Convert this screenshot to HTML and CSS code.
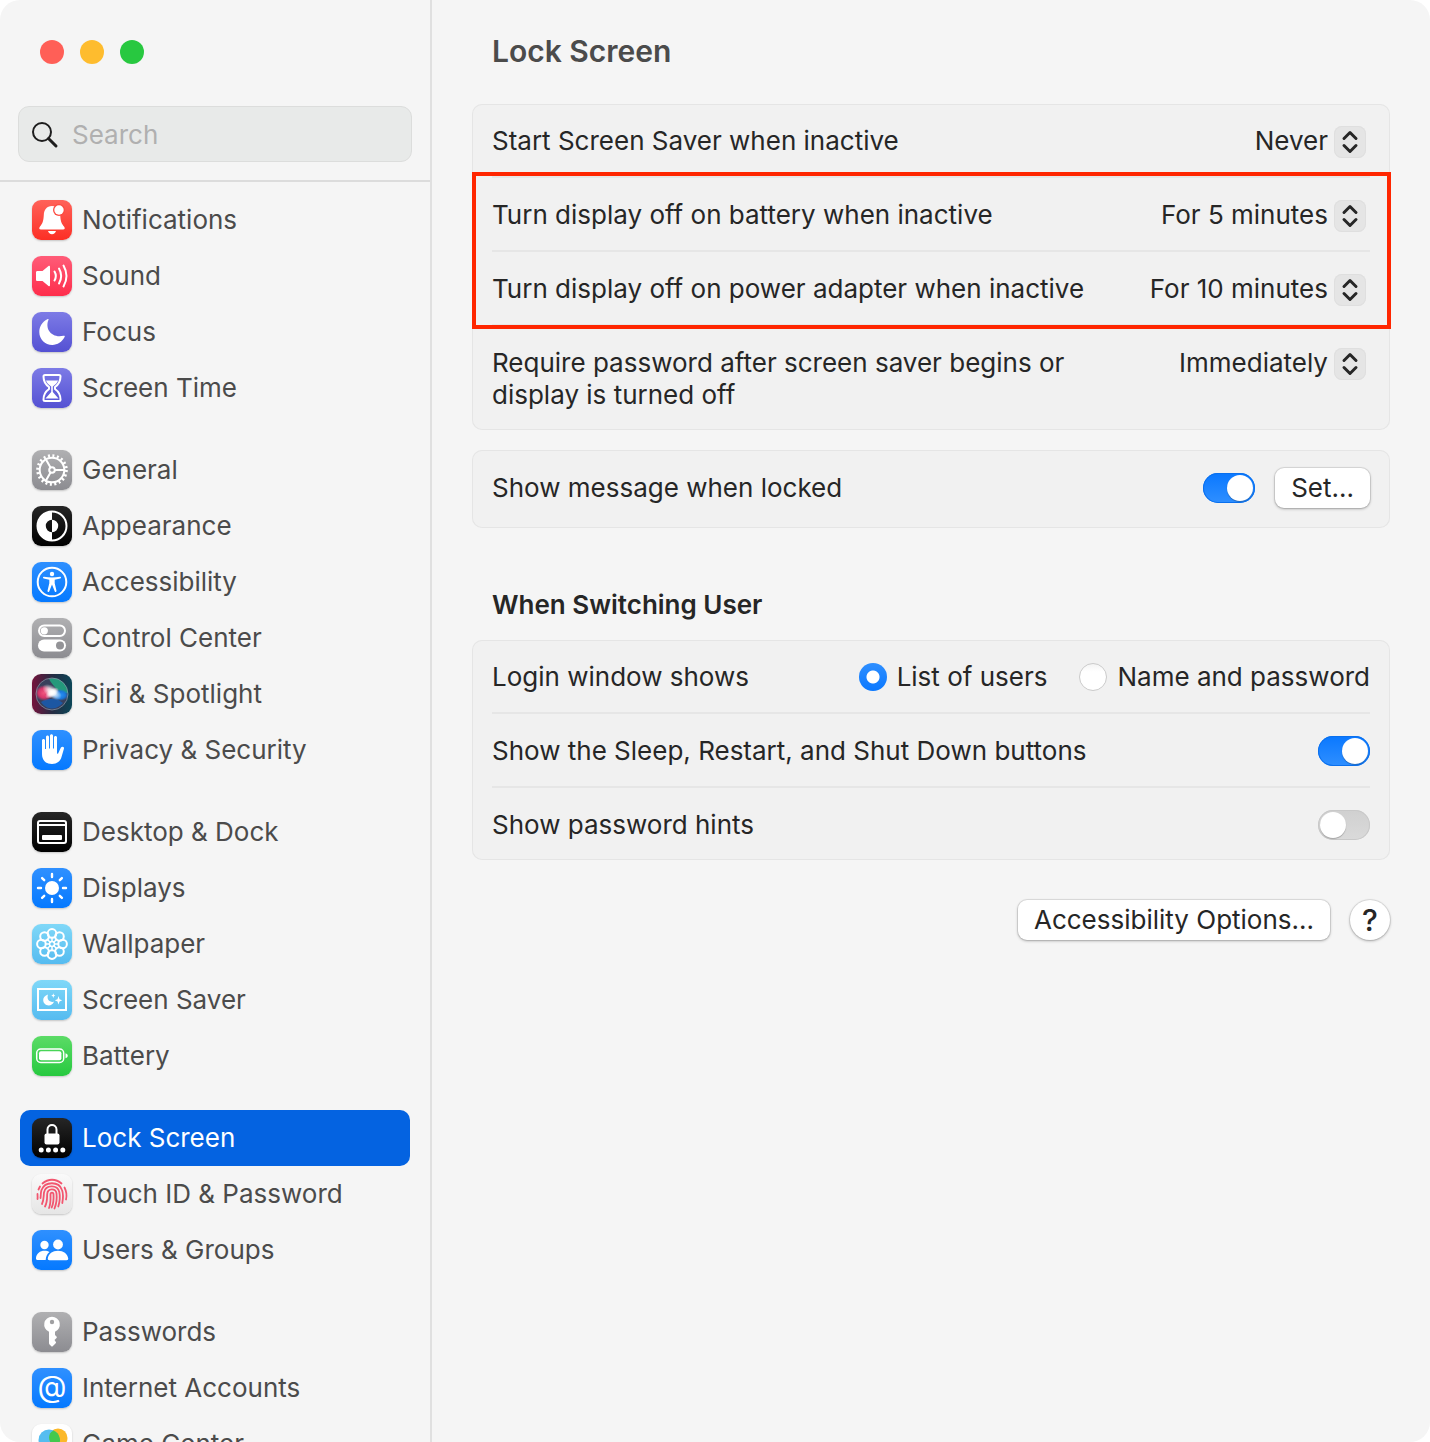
FILE: index.html
```html
<!DOCTYPE html>
<html lang="en">
<head>
    <meta charset="UTF-8">
    <meta name="viewport" content="width=device-width, initial-scale=1.0">
    <title>Lock Screen</title>
    <link rel="stylesheet" href="styles.css">
</head>
<body>
    <div class="window">
        <aside class="sidebar">
            <div class="traffic">
                <button type="button" class="light close" aria-label="Close"></button>
                <button type="button" class="light minimize" aria-label="Minimize"></button>
                <button type="button" class="light zoom" aria-label="Zoom"></button>
            </div>
            <label class="search">
                <svg class="search-icon" viewBox="0 0 28 28" aria-hidden="true">
                    <circle cx="11" cy="11" r="9"/>
                    <path d="M17.500 17.500 25 25" class="handle"/>
                </svg>
                <input type="search" placeholder="Search" aria-label="Search">
            </label>
            <nav class="menu">
                <ul>
                    <li><a href="#">
                        <svg class="icon red" viewBox="0 0 40 40" aria-hidden="true">
                            <path class="fill" d="M20 6c-5.500 0-8 4-8.200 9-.3 6-1.300 8.500-3.800 11.500-1.300 1.600-1 3 1 3h22c2 0 2.300-1.400 1-3-2.500-3-3.500-5.500-3.800-11.500C28 10 25.500 6 20 6zM16 31h8c-.5 2-2 3.200-4 3.200S16.500 33 16 31z"/>
                            <circle cx="27" cy="10" r="6" fill="#fc4b41" stroke="none"/>
                            <circle class="fill" cx="27" cy="10" r="4.700"/>
                        </svg>
                        Notifications</a></li>
                    <li><a href="#">
                        <svg class="icon pink" viewBox="0 0 40 40" aria-hidden="true">
                            <path class="fill" d="M5.500 15h5l6-5c.8-.7 1.500-.3 1.500.7v18.600c0 1-.7 1.400-1.500.7l-6-5h-5c-1 0-1.500-.5-1.500-1.500v-7c0-1 .5-1.500 1.500-1.500z"/>
                            <path class="line" d="M22.500 15.500c1.600 2.700 1.600 6.300 0 9M27 12.500c2.600 4.500 2.600 10.500 0 15M31.500 9.500c3.700 6.500 3.700 14.500 0 21"/>
                        </svg>
                        Sound</a></li>
                    <li><a href="#">
                        <svg class="icon purple" viewBox="0 0 40 40" aria-hidden="true">
                            <path class="fill" d="M16.500 7.800c-4 9.500 3.500 18.700 15 16 1.200-.3 1.600.3 1.100 1.300C30 30 25.500 33 20.300 33 13 33 7.300 27.200 7.300 20c0-5.500 3-10.200 8-12.700 1-.5 1.600-.4 1.200.5z"/>
                        </svg>
                        Focus</a></li>
                    <li><a href="#">
                        <svg class="icon purple" viewBox="0 0 40 40" aria-hidden="true">
                            <path class="line" d="M13 7h14c1 0 1.500.5 1.500 1.500 0 5.500-2 8-5.500 10.500v2c3.500 2.500 5.500 5 5.500 10.500 0 1-.5 1.500-1.500 1.500H13c-1 0-1.500-.5-1.500-1.500 0-5.500 2-8 5.500-10.500v-2c-3.500-2.500-5.500-5-5.500-10.500 0-1 .5-1.500 1.500-1.500z"/>
                            <path class="fill" d="M14 12.500h12c-.8 2.500-2.500 4-5.200 6V24l5.700 6.500h-13l5.700-6.500v-5.500c-2.700-2-4.400-3.500-5.200-6z"/>
                        </svg>
                        Screen Time</a></li>
                </ul>
                <ul>
                    <li><a href="#">
                        <svg class="icon gray" viewBox="0 0 40 40" aria-hidden="true">
                            <circle class="line teeth" cx="20" cy="20" r="14.300"/>
                            <circle class="line" cx="20" cy="20" r="12.300"/>
                            <circle class="line" cx="20" cy="20" r="2.800"/>
                            <path class="line" d="M23 20h9.500M18.500 17.400 13.700 9.100M18.500 22.600l-4.800 8.300"/>
                        </svg>
                        General</a></li>
                    <li><a href="#">
                        <svg class="icon black" viewBox="0 0 40 40" aria-hidden="true">
                            <circle class="line" cx="20" cy="20" r="14.500"/>
                            <path class="fill" d="M20 5.500a14.500 14.500 0 0 0 0 29v-8.300a6.200 6.200 0 0 1 0-12.400zM20 13.800a6.200 6.200 0 0 1 0 12.400z"/>
                        </svg>
                        Appearance</a></li>
                    <li><a href="#">
                        <svg class="icon blue" viewBox="0 0 40 40" aria-hidden="true">
                            <circle class="line" cx="20" cy="20" r="14.300"/>
                            <circle class="fill" cx="20" cy="12" r="2.200"/>
                            <path class="fill" d="M12 14.800c-1.200-.2-1.400 1.300-.3 1.600l5.600 1.400v3.500l-1.800 7.500c-.3 1.100 1.200 1.600 1.700.6l2.800-7 2.800 7c.5 1 2 .5 1.700-.6l-1.800-7.500v-3.500l5.600-1.400c1.100-.3.900-1.800-.3-1.600-5.500 1-10.500 1-16 0z"/>
                        </svg>
                        Accessibility</a></li>
                    <li><a href="#">
                        <svg class="icon gray" viewBox="0 0 40 40" aria-hidden="true">
                            <rect class="line" x="7" y="7.500" width="26" height="10.500" rx="5.200"/>
                            <circle class="fill" cx="12.300" cy="12.800" r="3.600"/>
                            <rect class="fill" x="6" y="21.500" width="28" height="12" rx="6"/>
                            <circle cx="28" cy="27.500" r="4" fill="#939397"/>
                        </svg>
                        Control Center</a></li>
                    <li><a href="#">
                        <svg class="icon siri" viewBox="0 0 40 40" aria-hidden="true">
                            <defs>
                                <radialGradient id="glow">
                                    <stop offset="0" stop-color="#fff"/>
                                    <stop offset=".4" stop-color="#fff" stop-opacity=".8"/>
                                    <stop offset="1" stop-color="#fff" stop-opacity="0"/>
                                </radialGradient>
                                <radialGradient id="rose">
                                    <stop offset="0" stop-color="#f2557f"/>
                                    <stop offset=".6" stop-color="#d5366a"/>
                                    <stop offset="1" stop-color="#d5366a" stop-opacity="0"/>
                                </radialGradient>
                                <radialGradient id="azure">
                                    <stop offset="0" stop-color="#2b95f7"/>
                                    <stop offset=".6" stop-color="#1b78dc"/>
                                    <stop offset="1" stop-color="#1b78dc" stop-opacity="0"/>
                                </radialGradient>
                            </defs>
                            <circle cx="20" cy="20" r="16" fill="#39405c"/>
                            <path d="M17 5c9-3 18 4 19 14-6 2-14-5-19-14z" fill="#24997b"/>
                            <path d="M9 28c8-5 16-4 22 1-6 7-16 8-22-1z" fill="#1c57a3"/>
                            <ellipse cx="12" cy="19" rx="9" ry="8" fill="url(#rose)"/>
                            <ellipse cx="28" cy="21" rx="9" ry="6" fill="url(#azure)"/>
                            <ellipse cx="20" cy="18" rx="11" ry="6" fill="url(#glow)" transform="rotate(35 20 18)"/>
                            <ellipse cx="20" cy="19" rx="8" ry="4" fill="url(#glow)" transform="rotate(-35 20 19)"/>
                            <circle cx="20" cy="20" r="16" fill="none" stroke="#9aa9b8" stroke-width="1" opacity=".6"/>
                        </svg>
                        Siri &amp; Spotlight</a></li>
                    <li><a href="#">
                        <svg class="icon blue" viewBox="0 0 40 40" aria-hidden="true">
                            <path class="fill" d="M10 21V10.500c0-2 3-2 3 0V19h1V7c0-2 3-2 3 0v11.500h1V5.800c0-2 3-2 3 0v12.700h1V7.500c0-2 3-2 3 0v16l1 .3 2.800-6c.9-1.900 3.700-1.200 3.200.7l-2.500 8.500C28.500 31 25 34 20 34c-6.500 0-10-4-10-10z"/>
                        </svg>
                        Privacy &amp; Security</a></li>
                </ul>
                <ul>
                    <li><a href="#">
                        <svg class="icon black" viewBox="0 0 40 40" aria-hidden="true">
                            <rect class="line" x="6" y="9" width="28" height="22" rx="2"/>
                            <path class="line" d="M7 13h26"/>
                            <rect class="fill" x="10" y="23" width="20" height="5" rx="1"/>
                        </svg>
                        Desktop &amp; Dock</a></li>
                    <li><a href="#">
                        <svg class="icon blue" viewBox="0 0 40 40" aria-hidden="true">
                            <circle class="fill" cx="20" cy="20" r="7"/>
                            <path class="line rays" d="M20 6v3M20 31v3M6 20h3M31 20h3M10.100 10.100l2.100 2.100M27.800 27.800l2.100 2.100M10.100 29.900l2.100-2.100M27.800 12.200l2.100-2.100"/>
                        </svg>
                        Displays</a></li>
                    <li><a href="#">
                        <svg class="icon cyan" viewBox="0 0 40 40" aria-hidden="true">
                            <g class="line">
                                <circle cx="20" cy="9.400" r="4.300"/>
                                <circle cx="27.500" cy="12.500" r="4.300"/>
                                <circle cx="30.600" cy="20" r="4.300"/>
                                <circle cx="27.500" cy="27.500" r="4.300"/>
                                <circle cx="20" cy="30.600" r="4.300"/>
                                <circle cx="12.500" cy="27.500" r="4.300"/>
                                <circle cx="9.400" cy="20" r="4.300"/>
                                <circle cx="12.500" cy="12.500" r="4.300"/>
                            </g>
                            <g class="line thin">
                                <circle cx="20" cy="20" r="2.500"/>
                                <path d="M20 17.500v-4M20 22.500v4M17.500 20h-4M22.500 20h4M18.200 18.200l-3-3M21.800 18.200l3-3M18.200 21.800l-3 3M21.800 21.800l3 3"/>
                            </g>
                        </svg>
                        Wallpaper</a></li>
                    <li><a href="#">
                        <svg class="icon cyan" viewBox="0 0 40 40" aria-hidden="true">
                            <rect class="line square" x="6" y="9" width="28" height="21"/>
                            <path class="fill" d="M16 14.500c-1.500 4.500 1 8 6 7.300-1.300 2.500-3 3.700-5.300 3.700-3.200 0-5.500-2.300-5.500-5.400 0-2.600 1.700-4.700 4.800-5.600zM26.500 16l1 3.200 2.700 1.100-2.700 1.100-1 3.200-1-3.200-2.700-1.100 2.700-1.100zM21.300 13.300l.6 1.700 1.500.6-1.500.6-.6 1.700-.6-1.700-1.500-.6 1.500-.6z"/>
                        </svg>
                        Screen Saver</a></li>
                    <li><a href="#">
                        <svg class="icon green" viewBox="0 0 40 40" aria-hidden="true">
                            <rect class="line thin" x="4.700" y="13" width="27" height="13.500" rx="4"/>
                            <rect class="fill" x="7" y="15.300" width="22.400" height="9" rx="2"/>
                            <path class="fill" d="M33.500 17.300c3 .8 3 4.200 0 5z"/>
                        </svg>
                        Battery</a></li>
                </ul>
                <ul>
                    <li><a href="#" class="selected" aria-current="page">
                        <svg class="icon black" viewBox="0 0 40 40" aria-hidden="true">
                            <path class="line" d="M15.500 17v-5.500c0-6 9-6 9 0V17"/>
                            <rect class="fill" x="12.500" y="15.500" width="15" height="11" rx="2"/>
                            <path class="line dots" d="M9.200 32h0M16.400 32h0M23.600 32h0M30.800 32h0"/>
                        </svg>
                        Lock Screen</a></li>
                    <li><a href="#">
                        <svg class="icon white" viewBox="0 0 40 40" aria-hidden="true">
                            <g class="print">
                                <path d="M10.500 9.500C16 4.500 24 4.500 29.500 9.500M6.500 15.500l1.500-3M32.500 13.500c2 4 2.500 8 1.500 12M5.500 20c0 2 .3 3.500 0 5"/>
                                <path d="M8.500 24c.5-3 0-5 1-8 3.500-9 17.500-9 20.500 0 1.500 4 1.200 8 .3 13"/>
                                <path d="M10 30c2-4 1.500-7.500 2-11.500 1.500-8 13.500-8 15.300-.5 1 4.500.5 9.500-1 14.500"/>
                                <path d="M13 32.500c2.500-4.500 2-9 2.200-12.500.5-6 8.500-6 9.300-.5.600 5 0 10-2 15"/>
                                <path d="M17 34c2-4.500 1.500-9.500 1.500-13.500 0-2.500 3-2.500 3 0 .3 4.500 0 9-1.800 13"/>
                            </g>
                        </svg>
                        Touch ID &amp; Password</a></li>
                    <li><a href="#">
                        <svg class="icon blue" viewBox="0 0 40 40" aria-hidden="true">
                            <circle class="fill" cx="12.500" cy="15" r="4.200"/>
                            <path class="fill" d="M17.500 22c-2.500 2-3.600 4.500-3.800 8H5.500c-1.200 0-1.600-.7-1.500-2 .5-4.500 4-7.200 8.500-7.200 2 0 3.700.4 5 1.200z"/>
                            <circle class="fill" cx="26" cy="14.500" r="4.900"/>
                            <path class="fill" d="M26 20.800c-5.500 0-9.500 3-10.200 7.500-.2 1.200.4 1.900 1.700 1.900h17c1.300 0 1.900-.7 1.700-1.900-.7-4.500-4.700-7.500-10.200-7.500z"/>
                        </svg>
                        Users &amp; Groups</a></li>
                </ul>
                <ul>
                    <li><a href="#">
                        <svg class="icon gray" viewBox="0 0 40 40" aria-hidden="true">
                            <path class="fill" d="M20 4.800a7.800 7.800 0 0 0-3 15V31c0 .8.200 1.200.8 1.800l1.500 1.500c.4.400 1 .4 1.400 0l3-3c.5-.5.500-1 0-1.500L22.500 28l2-2c.5-.5.500-1 0-1.500L23 23v-3.200a7.800 7.800 0 0 0-3-15z"/>
                            <circle cx="20" cy="10" r="2.200" fill="#a0a0a2"/>
                        </svg>
                        Passwords</a></li>
                    <li><a href="#">
                        <svg class="icon blue" viewBox="0 0 40 40" aria-hidden="true">
                            <text class="at" x="20" y="29" text-anchor="middle">@</text>
                        </svg>
                        Internet Accounts</a></li>
                    <li><a href="#">
                        <svg class="icon plain" viewBox="0 0 40 40" aria-hidden="true">
                            <circle cx="26" cy="14" r="9.500" fill="#fbb829"/>
                            <circle cx="17" cy="16" r="10.500" fill="#55bdf0"/>
                            <path d="M21.500 6.500a10.500 10.500 0 0 1 4 16.500A9.500 9.500 0 0 1 18 9.500a9 9 0 0 1 3.500-3z" fill="#43c94e"/>
                            <circle cx="26" cy="27" r="8" fill="#f4508a"/>
                        </svg>
                        Game Center</a></li>
                </ul>
            </nav>
        </aside>

        <main class="content">
            <h1>Lock Screen</h1>

            <section class="card">
                <div class="row">
                    <label for="saver">Start Screen Saver when inactive</label>
                    <span class="popup">
                        <select id="saver"><option>Never</option></select>
                        <svg class="arrows" viewBox="0 0 32 32" aria-hidden="true"><path d="M10 12.500l6-6 6 6M10 19.500l6 6 6-6"/></svg>
                    </span>
                </div>
                <div class="highlight">
                    <div class="row">
                        <label for="battery">Turn display off on battery when inactive</label>
                        <span class="popup">
                            <select id="battery"><option>For 5 minutes</option></select>
                            <svg class="arrows" viewBox="0 0 32 32" aria-hidden="true"><path d="M10 12.500l6-6 6 6M10 19.500l6 6 6-6"/></svg>
                        </span>
                    </div>
                    <div class="row">
                        <label for="adapter">Turn display off on power adapter when inactive</label>
                        <span class="popup">
                            <select id="adapter"><option>For 10 minutes</option></select>
                            <svg class="arrows" viewBox="0 0 32 32" aria-hidden="true"><path d="M10 12.500l6-6 6 6M10 19.500l6 6 6-6"/></svg>
                        </span>
                    </div>
                </div>
                <div class="row">
                    <label for="require" class="wrap">Require password after screen saver begins or display is turned off</label>
                    <span class="popup">
                        <select id="require"><option>Immediately</option></select>
                        <svg class="arrows" viewBox="0 0 32 32" aria-hidden="true"><path d="M10 12.500l6-6 6 6M10 19.500l6 6 6-6"/></svg>
                    </span>
                </div>
            </section>

            <section class="card">
                <div class="row message">
                    <label for="message">Show message when locked</label>
                    <span class="controls">
                        <input type="checkbox" class="switch" id="message" checked>
                        <button type="button" class="button">Set...</button>
                    </span>
                </div>
            </section>

            <h2>When Switching User</h2>
            <section class="card">
                <div class="row">
                    <span id="login">Login window shows</span>
                    <span class="radios" role="radiogroup" aria-labelledby="login">
                        <label><input type="radio" name="login" checked>List of users</label>
                        <label><input type="radio" name="login">Name and password</label>
                    </span>
                </div>
                <div class="row">
                    <label for="buttons">Show the Sleep, Restart, and Shut Down buttons</label>
                    <input type="checkbox" class="switch" id="buttons" checked>
                </div>
                <div class="row">
                    <label for="hints">Show password hints</label>
                    <input type="checkbox" class="switch" id="hints">
                </div>
            </section>

            <div class="actions">
                <button type="button" class="button">Accessibility Options...</button>
                <button type="button" class="button help" aria-label="Help">?</button>
            </div>
        </main>
    </div>
</body>
</html>
```
FILE: styles.css
```css
* {
    box-sizing: border-box;
}
body {
    margin: 0;
    background-color: #fff;
    color: #262626;
    font-family: Inter, "Liberation Sans", sans-serif;
    font-size: 26px;
    line-height: 32px;
}
button, input, select {
    font: inherit;
    color: inherit;
    margin: 0;
}
.window {
    display: flex;
    height: 100vh;
    overflow: hidden;
    background-color: #f5f5f5;
    border-radius: 20px;
}

/* sidebar */
.sidebar {
    display: flex;
    flex-direction: column;
    flex: none;
    width: 432px;
    border-right: 2px solid #e0e0e0;
    color: #4b4b4b;
}
.traffic {
    display: flex;
    gap: 16px;
    padding: 40px 40px 42px;
}
.light {
    width: 24px;
    height: 24px;
    padding: 0;
    border: none;
    border-radius: 50%;
}
.close {
    background-color: #ff5f57;
}
.minimize {
    background-color: #febc2e;
}
.zoom {
    background-color: #28c840;
}
.search {
    display: flex;
    flex: none;
    align-items: center;
    gap: 13px;
    height: 56px;
    margin: 0 18px 18px;
    padding: 1px 12px 0;
    background-color: #e8eae9;
    border: 1px solid #dcdddc;
    border-radius: 11px;
}
.search-icon {
    flex: none;
    width: 28px;
    height: 28px;
    fill: none;
    stroke: #1e1e1e;
    stroke-width: 2;
    stroke-linecap: round;
}
.handle {
    stroke-width: 3;
}
.search input {
    width: 100%;
    padding: 0;
    border: none;
    outline: none;
    background: none;
    appearance: none;
}
.search input::placeholder {
    color: #b0b0b0;
}
.menu {
    display: flex;
    flex-direction: column;
    flex: 1;
    gap: 26px;
    min-height: 0;
    padding: 10px 20px;
    overflow: hidden;
    border-top: 2px solid #dcdcdc;
}
.menu ul {
    flex: none;
    margin: 0;
    padding: 0;
    list-style: none;
}
.menu a {
    display: flex;
    align-items: center;
    gap: 10px;
    height: 56px;
    padding: 0 12px;
    border-radius: 10px;
    color: inherit;
    text-decoration: none;
    white-space: nowrap;
}
.menu .selected {
    background-color: #0463e1;
    color: #fff;
}

/* icons */
.icon {
    flex: none;
    width: 40px;
    height: 40px;
    border-radius: 9px;
    box-shadow: 0 1px 2px rgba(0, 0, 0, 0.2);
}
.red { background: linear-gradient(#ff6259, #fc2f25); }
.pink { background: linear-gradient(#ff5c78, #fe2d4b); }
.purple { background: linear-gradient(#7d7be6, #5451d3); }
.gray { background: linear-gradient(#b0b0b2, #8c8c91); }
.black { background: linear-gradient(#262626, #000); }
.blue { background: linear-gradient(#2f90ff, #0579ff); }
.cyan { background: linear-gradient(#80d8f8, #55bbf0); }
.green { background: linear-gradient(#5bdb66, #27c93f); }
.siri { background: linear-gradient(90deg, #75133c, #252b42 50%, #0c4658); }
.white { background: linear-gradient(#fafafa, #e6e6e6); }
.plain { background: #fff; }
.fill {
    fill: #fff;
}
.line {
    fill: none;
    stroke: #fff;
    stroke-width: 2;
    stroke-linecap: round;
    stroke-linejoin: round;
}
.rays {
    stroke-width: 2.4;
}
.thin {
    stroke-width: 1.5;
}
.square {
    stroke-linejoin: miter;
}
.teeth {
    stroke-width: 3;
    stroke-linecap: butt;
    stroke-dasharray: 2 2.492;
}
.dots {
    stroke-width: 5;
}
.print {
    fill: none;
    stroke: #f2566f;
    stroke-width: 1.8;
    stroke-linecap: round;
}
.at {
    fill: #fff;
    font-size: 30px;
}

/* content */
.content {
    flex: 1;
    min-width: 0;
    padding: 31px 40px;
}
h1 {
    margin: 0 20px 33px;
    color: #4b4b4b;
    font-size: 30px;
    line-height: 40px;
    font-weight: 600;
}
h2 {
    margin: 61px 20px 19px;
    font-size: 26px;
    line-height: 32px;
    font-weight: 600;
}
.card {
    margin-bottom: 20px;
    padding: 0 20px;
    background-color: #f1f1f1;
    border-radius: 10px;
    box-shadow: inset 0 0 0 1px #e5e5e5;
}
.row {
    display: flex;
    justify-content: space-between;
    gap: 20px;
    padding: 21px 0 19px;
    border-bottom: 2px solid #e6e6e6;
}
.card > .row:last-child {
    border-bottom: none;
}
.wrap {
    max-width: 600px;
}
.highlight {
    position: relative;
}
.highlight::after {
    content: "";
    position: absolute;
    inset: -6px -21px -3px -20px;
    border: 4px solid #ff2600;
    pointer-events: none;
}
.popup {
    display: grid;
    flex: none;
    align-items: start;
    height: 32px;
}
.popup select, .arrows {
    grid-area: 1 / 1;
}
.popup select {
    height: 32px;
    padding: 0 42px 0 0;
    border: none;
    background: none;
    appearance: none;
    text-align-last: right;
}
.arrows {
    justify-self: end;
    width: 32px;
    height: 32px;
    margin: 1px 4px 0 0;
    background-color: #e5e5e5;
    border-radius: 8px;
    box-shadow: inset 0 0 0 1px #dfdfdf;
    fill: none;
    stroke: #262626;
    stroke-width: 3;
    stroke-linecap: round;
    stroke-linejoin: round;
    pointer-events: none;
}
.message {
    align-items: center;
    padding: 18px 0 20px;
}
.controls {
    display: flex;
    align-items: center;
    gap: 20px;
}
.switch {
    flex: none;
    align-self: center;
    width: 52px;
    height: 30px;
    padding: 2px;
    border-radius: 15px;
    background: linear-gradient(#d0d0d0, #dadada);
    box-shadow: inset 0 0 0 1px #c8c8c8;
    appearance: none;
}
.switch::before {
    content: "";
    display: block;
    width: 26px;
    height: 26px;
    border-radius: 50%;
    background-color: #fff;
    box-shadow: 0 1px 1px rgba(0, 0, 0, 0.25);
}
.switch:checked {
    background: linear-gradient(#0a78ff, #2f8fff);
    box-shadow: inset 0 0 0 1px #0a70ee;
}
.switch:checked::before {
    margin-left: 22px;
}
.radios {
    display: flex;
    gap: 32px;
}
.radios label {
    display: flex;
    align-items: center;
    gap: 10px;
}
.radios input {
    width: 28px;
    height: 28px;
    border: 1px solid #cbcbcb;
    border-radius: 50%;
    background: linear-gradient(#f4f4f4, #fff 30%);
    appearance: none;
}
.radios input:checked {
    border: none;
    background: radial-gradient(circle, #fff 6px, transparent 7px), linear-gradient(#2f8fff, #0a78ff);
}
.button {
    height: 40px;
    padding: 0 16px;
    border: none;
    border-radius: 9px;
    background-color: #fff;
    box-shadow: 0 0 0 1px rgba(0, 0, 0, 0.08), 0 1px 3px rgba(0, 0, 0, 0.3);
}
.actions {
    display: flex;
    justify-content: flex-end;
    gap: 20px;
    padding-top: 20px;
}
.help {
    width: 40px;
    padding: 0;
    border-radius: 50%;
    font-size: 30px;
    font-weight: 500;
}
```
